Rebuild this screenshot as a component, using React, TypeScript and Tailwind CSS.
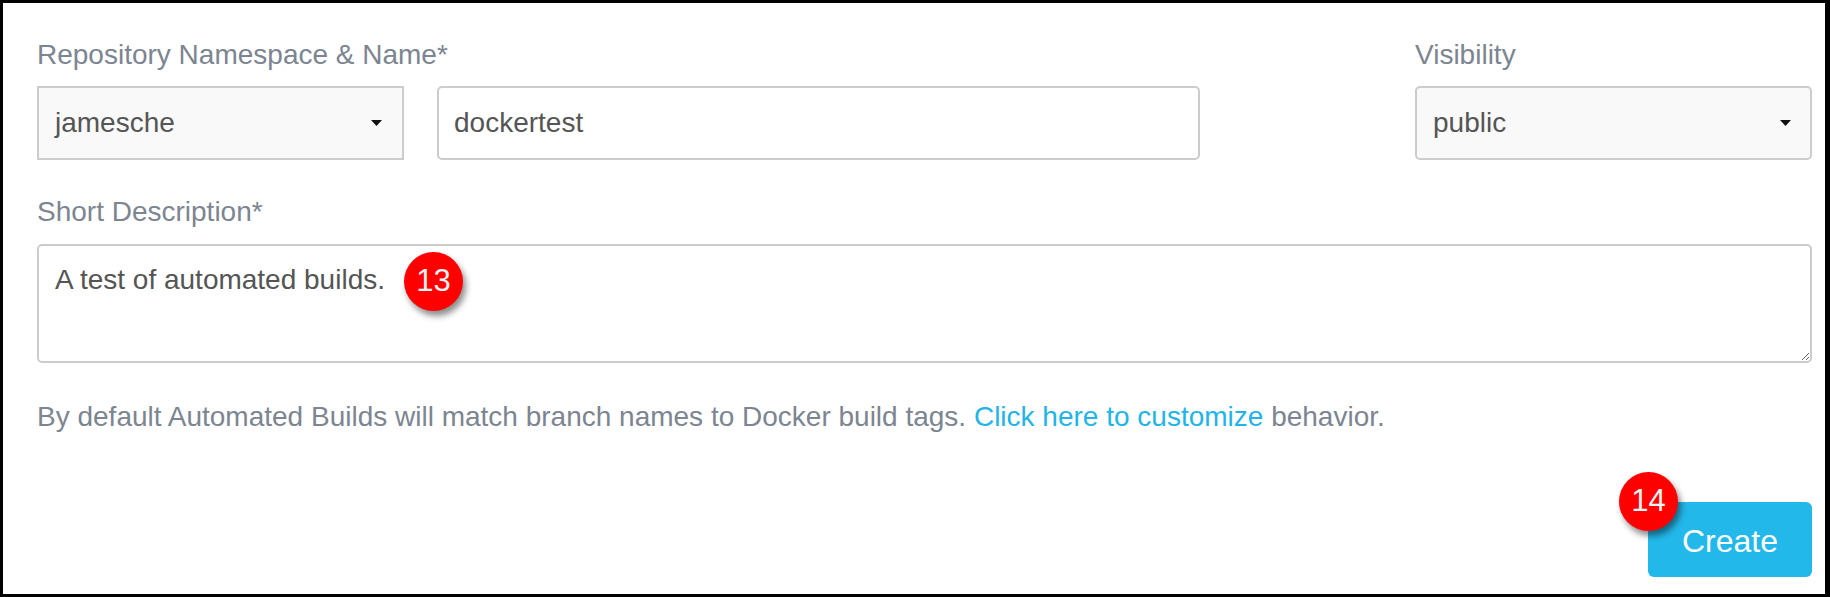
import React from "react";

const FONT = { fontFamily: '"Liberation Sans", Arial, sans-serif' };
const LABEL = "text-[28px] leading-[40px] text-[#7c8591] mb-[11px]";
const FIELD = "h-[74px] border-2 border-[#cccccc] flex items-center text-[28px] text-[#555555]";

function Caret() {
  return (
    <svg width="11" height="6" viewBox="0 0 11 6" className="shrink-0">
      <path d="M0 0 L11 0 L5.5 6 Z" fill="#111" />
    </svg>
  );
}

function Badge({ n, className }: { n: number; className: string }) {
  return (
    <div
      className={
        "absolute w-[59px] h-[59px] rounded-full bg-[#ff0000] text-[#f2f2f2] text-[31px] flex items-center justify-center shadow-[3px_5px_6px_rgba(0,0,0,0.45)] " +
        className
      }
    >
      {n}
    </div>
  );
}

export default function App() {
  return (
    <div
      style={FONT}
      className="w-[1830px] h-[597px] box-border bg-white border-solid border-black border-t-[3px] border-l-[3px] border-b-[3px] border-r-[5px] pt-[32px] pl-[34px] pr-[13px]"
    >
      <div className="flex justify-between items-start">
        <div>
          <div className={LABEL}>Repository Namespace &amp; Name*</div>
          <div className="flex gap-[33px]">
            <div className={FIELD + " w-[367px] bg-[#f9f9f9] pl-[16px] pr-[20px] justify-between"}>
              <span>jamesche</span>
              <Caret />
            </div>
            <div className={FIELD + " w-[763px] bg-white rounded-[5px] pl-[15px]"}>
              <span>dockertest</span>
            </div>
          </div>
        </div>
        <div className="w-[397px]">
          <div className={LABEL}>Visibility</div>
          <div className={FIELD + " bg-[#f9f9f9] rounded-[5px] pl-[16px] pr-[19px] justify-between"}>
            <span>public</span>
            <Caret />
          </div>
        </div>
      </div>

      <div className="mt-[32px]">
        <div className="text-[28px] leading-[40px] text-[#7c8591] mb-[12px]">Short Description*</div>
        <div className="relative">
          <textarea
            readOnly
            defaultValue="A test of automated builds."
            className="block w-full h-[119px] border-2 border-[#cccccc] rounded-[5px] px-[16px] py-[14px] text-[28px] leading-[40px] text-[#555555] outline-none"
          />
          <Badge n={13} className="left-[367px] top-[8px]" />
        </div>
      </div>

      <p className="mt-[34px] text-[28px] leading-[40px] text-[#7c8591]">
        By default Automated Builds will match branch names to Docker build tags.{" "}
        <span className="text-[#22b4e8]">Click here to customize</span> behavior.
      </p>

      <div className="flex justify-end mt-[65px]">
        <div className="relative">
          <button className="w-[164px] h-[75px] rounded-[6px] bg-[#23b8ea] text-white text-[32px] pt-[3px] flex items-center justify-center">
            Create
          </button>
          <Badge n={14} className="-left-[29px] -top-[30px]" />
        </div>
      </div>
    </div>
  );
}
